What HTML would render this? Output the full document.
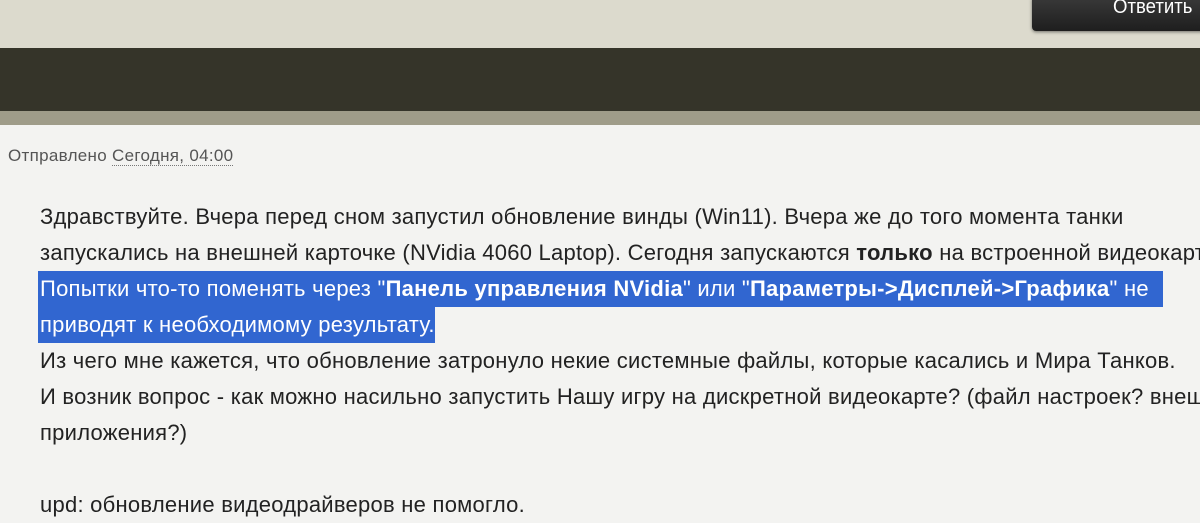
<!DOCTYPE html>
<html><head><meta charset="utf-8"><style>
body{margin:0;width:1200px;height:516px;overflow:hidden;background:#f3f3f1;font-family:"Liberation Sans",Arial,sans-serif;position:relative}
.top{position:absolute;left:0;top:0;width:1200px;height:48px;background:#dcdacd}
.dark{position:absolute;left:0;top:48px;width:1200px;height:63px;background:#353429;border-bottom:1px solid #55544a}
.band{position:absolute;left:0;top:111px;width:1200px;height:14px;background:#9f9c89}
.btn{position:absolute;left:1032px;top:-4px;width:180px;height:35px;background:linear-gradient(#3a3a3a,#1e1e1e);border-radius:4px;box-shadow:0 1px 3px rgba(0,0,0,.5);color:#fff;font-size:20px;line-height:22px}
.btn span{position:absolute;right:20px;top:0;display:inline-block;transform:scaleX(.93);transform-origin:right}
.meta{position:absolute;left:8px;top:146px;font-size:17px;color:#555;transform:scaleX(1.0);transform-origin:left;letter-spacing:0.3px}
.meta span{border-bottom:1px dotted #777}
.post{position:absolute;left:40px;top:199px;width:1400px;font-size:22px;line-height:36px;color:#222;white-space:nowrap;letter-spacing:0.25px}
.sel{background:#3166d0;color:#fff;display:inline-block;height:36px;vertical-align:top;margin-left:-2px;padding-left:2px}
</style></head><body>
<div class="top"></div><div class="dark"></div><div class="band"></div>
<div class="btn"><span>Ответить</span></div>
<div class="meta">Отправлено <span>Сегодня, 04:00</span></div>
<div class="post">
Здравствуйте. Вчера перед сном запустил обновление винды (Win11). Вчера же до того момента танки<br>
запускались на внешней карточке (NVidia 4060 Laptop). Сегодня запускаются <b>только</b> на встроенной видеокарте.<br>
<span class="sel" style="width:1123px">Попытки что-то поменять через "<b>Панель управления NVidia</b>" или "<b>Параметры-&gt;Дисплей-&gt;Графика</b>" не</span><br>
<span class="sel">приводят к необходимому результату.</span><br>
Из чего мне кажется, что обновление затронуло некие системные файлы, которые касались и Мира Танков.<br>
И возник вопрос - как можно насильно запустить Нашу игру на дискретной видеокарте? (файл настроек? внешние<br>
приложения?)<br>
<br>
upd: обновление видеодрайверов не помогло.
</div>
</body></html>
